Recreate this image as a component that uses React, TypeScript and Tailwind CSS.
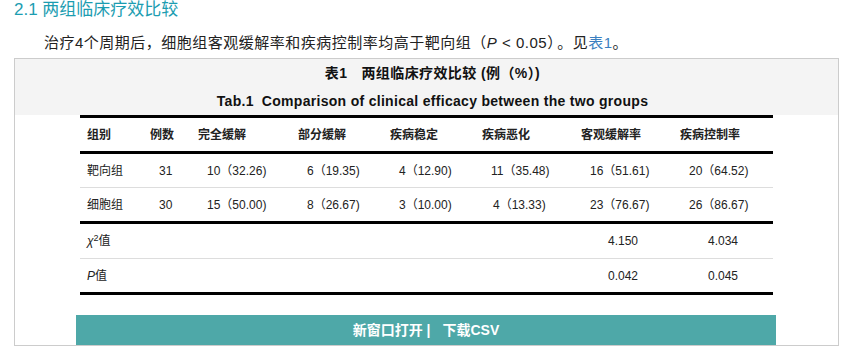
import { memo } from "react"

const cols = "grid grid-cols-[63px_48px_100px_92px_92px_99px_99px_100px] items-center"

const heads = ["组别", "例数", "完全缓解", "部分缓解", "疾病稳定", "疾病恶化", "客观缓解率", "疾病控制率"]

const rows = [
    ["靶向组", "31", "10（32.26)", "6（19.35)", "4（12.90)", "11（35.48)", "16（51.61)", "20（64.52)"],
    ["细胞组", "30", "15（50.00)", "8（26.67)", "3（10.00)", "4（13.33)", "23（76.67)", "26（86.67)"],
]

const _App = () => {
    return (
        <div className="w-[850px] h-[360px] bg-white px-[14px] overflow-hidden text-[#222] font-['Liberation_Sans','Noto_Sans_CJK_SC',sans-serif]">
            <h2 className="h-[20px] leading-[20px] text-[17px] font-normal text-[#1c9db1]">2.1 两组临床疗效比较</h2>
            <p className="mt-[12px] pl-[30px] h-[22px] leading-[22px] text-[15px] tracking-[0.5px] text-[#222]">
                治疗4个周期后，细胞组客观缓解率和疾病控制率均高于靶向组（<i>P</i> &lt; 0.05）
                <span className="ml-[2px]">。见</span>
                <span className="text-[#3b7fc0]">表1</span>。
            </p>
            <div className="mt-[4px] w-[825px] h-[288px] border border-[#cccccc] flex flex-col">
                <div className="bg-[#f4f4f4] h-[56px] pl-[12px] flex flex-col items-center text-[14px] font-bold text-[#111]">
                    <div className="h-[28px] leading-[28px] tracking-[0.4px]">
                        表1<span className="ml-[14px]">两组临床疗效比较 (例（%）)</span>
                    </div>
                    <div className="h-[28px] leading-[28px] tracking-[0.3px]">
                        Tab.1<span className="ml-[8px]">Comparison of clinical efficacy between the two groups</span>
                    </div>
                </div>
                <div className="ml-[65px] w-[693px] border-t-[3px] border-black text-[12px]">
                    <div className={`${cols} h-[36px] border-b-[3px] border-black font-bold`}>
                        {heads.map((h) => (
                            <div key={h} className="pl-[7px]">{h}</div>
                        ))}
                    </div>
                    {rows.map((r, i) => (
                        <div
                            key={r[0]}
                            className={`${cols} ${i === 0 ? "h-[34px] border-b border-[#dddddd]" : "h-[36px] border-b-[3px] border-black"}`}
                        >
                            {r.map((c, j) => (
                                <div key={j} className={j === 0 ? "pl-[7px]" : j === 5 && c.length < 9 ? "pl-[18px]" : "pl-[16px]"}>
                                    {c}
                                </div>
                            ))}
                        </div>
                    ))}
                    <div className={`${cols} h-[35px] border-b border-[#dddddd]`}>
                        <div className="pl-[7px] col-span-6">
                            <i>χ</i><sup className="text-[9px]">2</sup>值
                        </div>
                        <div className="pl-[34px]">4.150</div>
                        <div className="pl-[35px]">4.034</div>
                    </div>
                    <div className={`${cols} h-[36px] border-b-[3px] border-black`}>
                        <div className="pl-[7px] col-span-6">
                            <i>P</i>值
                        </div>
                        <div className="pl-[34px]">0.042</div>
                        <div className="pl-[35px]">0.045</div>
                    </div>
                </div>
                <div className="mt-auto ml-[61px] w-[700px] h-[30px] bg-[#4ea8a8] flex items-center justify-center text-white text-[14px] font-bold">
                    新窗口打开 |<span className="ml-[12px]">下载CSV</span>
                </div>
            </div>
        </div>
    )
}

export default memo(_App)
